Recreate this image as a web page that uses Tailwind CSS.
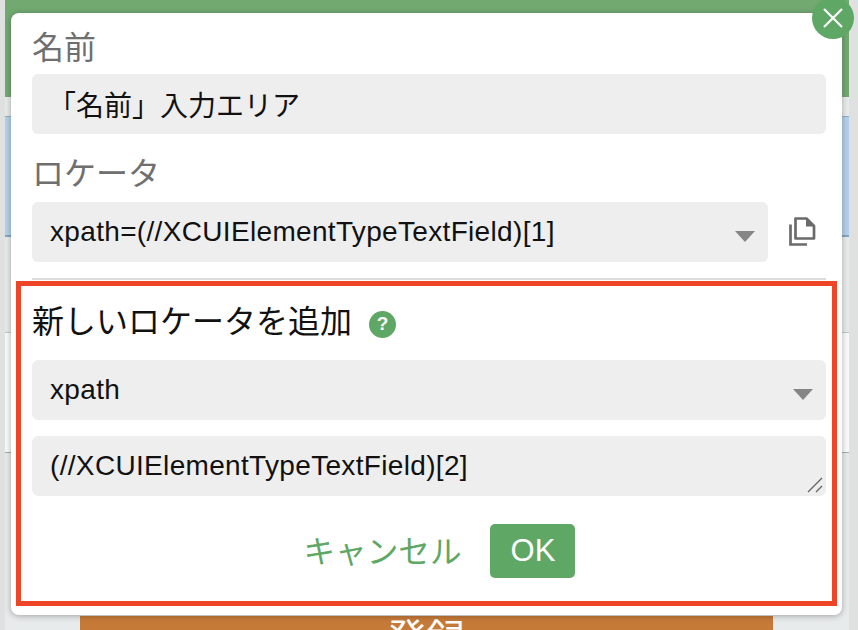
<!DOCTYPE html>
<html lang="ja">
<head>
  <meta charset="UTF-8" />
  <title>ロケータ</title>
  <script src="https://cdn.jsdelivr.net/npm/@tailwindcss/browser@4"></script>
</head>
<body class="relative w-[858px] h-[630px] overflow-hidden bg-[#dfe0e0] font-['Liberation_Sans','Noto_Sans_CJK_JP',sans-serif]">
  <!-- page behind the dialog -->
  <div class="ml-[5px] w-[844px] h-[630px] bg-[#e8ebeb]">
    <div class="h-[97px] bg-[#72a971]"></div>
    <div class="h-[19px]"></div>
    <div class="h-[121px] bg-[#b5d0ea] border-t border-b-2 border-t-[#8fb0cf] border-b-[#84a6c6]"></div>
    <div class="h-[96px] border-b border-[#c4c6c7]"></div>
    <div class="h-[120px] bg-[#fafafa] border-b border-[#a9abac]"></div>
    <div class="mt-[163px] ml-[75px] w-[693px] h-[30px] bg-[#c67a38] text-center text-[40px] leading-[46px] text-white overflow-hidden">登録</div>
  </div>

  <!-- dialog -->
  <div class="absolute left-[11px] top-[13px] w-[831px] h-[602px] bg-white rounded-[8px] shadow-[0_1px_6px_rgba(0,0,0,0.3)] pl-[21px] pr-[16px] pt-[16px]">
    <div class="text-[32px] leading-[38px] text-[#6f6f6f]">名前</div>
    <div class="mt-[7px] h-[60px] rounded-[6px] bg-[#eeeeee] px-[18px] flex items-center text-[28px] text-[#111] font-['Noto_Sans_CJK_JP',sans-serif]"><span class="-ml-[2px]">「名前」入力エリア</span></div>

    <div class="mt-[21px] text-[32px] leading-[38px] text-[#6f6f6f]">ロケータ</div>
    <div class="mt-[9px] flex items-center">
      <div class="w-[736px] h-[60px] rounded-[6px] bg-[#eeeeee] pl-[18px] pr-[13px] flex items-center justify-between text-[28px] tracking-[0.33px] text-[#111]">
        <span>xpath=(//XCUIElementTypeTextField)[1]</span>
        <svg class="mt-[8px]" width="20" height="11" viewBox="0 0 20 11"><path d="M0 0H20L10 11Z" fill="#868686"/></svg>
      </div>
      <svg class="ml-[20px] -mt-[2px]" width="28" height="30" viewBox="0 0 28 30" fill="none" stroke="#6b6b6b" stroke-width="2.7">
        <path d="M7.5 2.5H18.5L26 10V22.5H7.5Z" stroke-linejoin="round"/>
        <path d="M18 2.5L26 10.5H18Z" fill="#6b6b6b" stroke="none"/>
        <path d="M2.5 8.5V28.5H19" />
      </svg>
    </div>
    <div class="mt-[16px] h-[2px] bg-[#dcdcdc]"></div>

    <div class="-ml-[16px] mt-[1px] w-[821px] h-[325px] border-[5px] border-[#ee4527] pl-[11px] pr-[6px] pt-[17px]">
      <div class="flex items-center text-[32px] leading-[38px] text-[#111]">
        <span>新しいロケータを追加</span>
        <span class="ml-[17px] mt-[4px] w-[27px] h-[27px] rounded-full bg-[#5fa765] text-white text-[19px] font-bold flex items-center justify-center">?</span>
      </div>
      <div class="mt-[19px] h-[60px] rounded-[6px] bg-[#eeeeee] pl-[18px] pr-[13px] flex items-center justify-between text-[28px] tracking-[0.33px] text-[#111]">
        <span>xpath</span>
        <svg class="mt-[8px]" width="20" height="11" viewBox="0 0 20 11"><path d="M0 0H20L10 11Z" fill="#868686"/></svg>
      </div>
      <div class="relative mt-[16px] h-[60px] rounded-[6px] bg-[#eeeeee] pl-[18px] flex items-center text-[28px] tracking-[0.33px] text-[#111]">
        <span>(//XCUIElementTypeTextField)[2]</span>
        <svg class="absolute right-[3px] bottom-[3px]" width="16" height="16" viewBox="0 0 16 16" stroke="#666" stroke-width="1.4"><path d="M1 15L15 1M9 15L15 9"/></svg>
      </div>
      <div class="mt-[28px] pl-[21px] flex items-center justify-center">
        <span class="mt-[3px] text-[31.6px] text-[#5fa765]">キャンセル</span>
        <span class="ml-[29px] w-[85px] h-[54px] rounded-[5px] bg-[#5fa765] text-white text-[31px] flex items-center justify-center">OK</span>
      </div>
    </div>
  </div>

  <!-- close button -->
  <div class="absolute left-[812px] -top-[3px] w-[42px] h-[42px] rounded-full bg-[#5fa765] flex items-center justify-center">
    <svg width="20" height="20" viewBox="0 0 20 20" stroke="#fff" stroke-width="2.2"><path d="M1 1L19 19M19 1L1 19"/></svg>
  </div>
</body>
</html>
